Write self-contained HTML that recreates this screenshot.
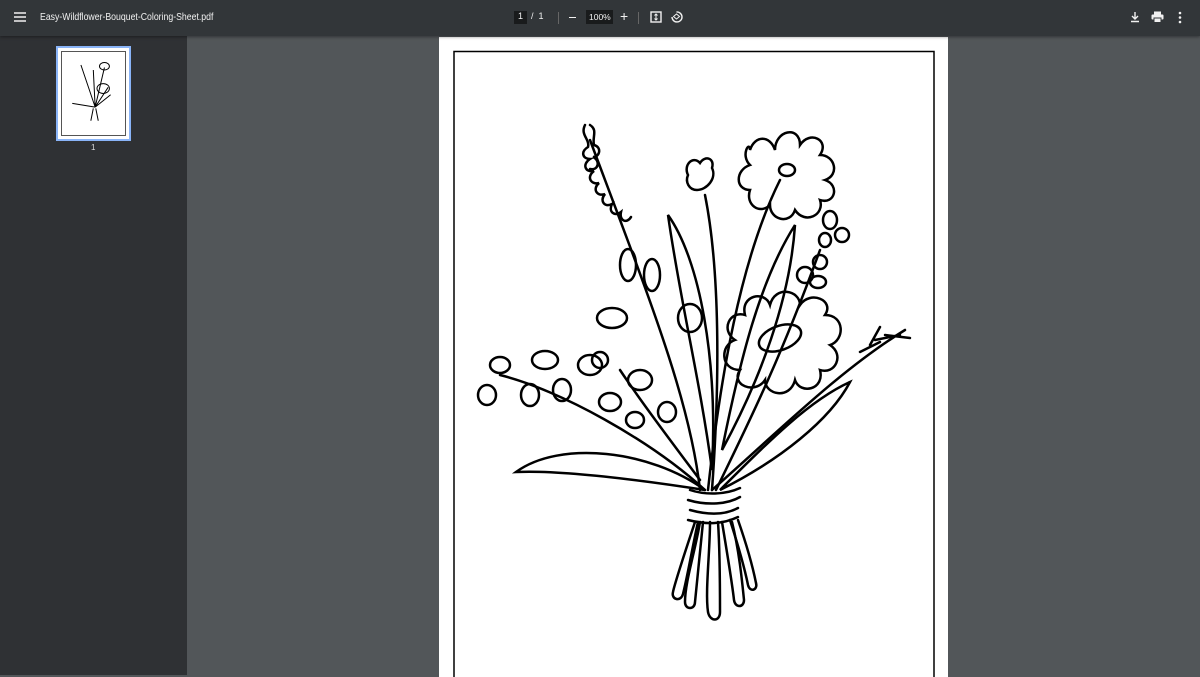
<!DOCTYPE html>
<html><head><style>
body{margin:0;width:1200px;height:675px;overflow:hidden;background:#525659;font-family:"Liberation Sans",sans-serif;position:relative}
#tb{position:absolute;left:0;top:0;width:1200px;height:36px;background:#323639;box-shadow:0 1px 3px rgba(0,0,0,.4);color:#f1f1f1;z-index:2}
#sb{position:absolute;left:0;top:36px;width:187px;height:639px;background:#2f3134}
#page{position:absolute;left:439px;top:37px;width:509px;height:640px;background:#fff}
.t{position:absolute;font-size:10px;top:11px}
</style></head><body>
<div id="tb">
<svg style="position:absolute;left:14px;top:12px" width="12" height="10"><path d="M0 1h12M0 5h12M0 9h12" stroke="#f1f1f1" stroke-width="1.4"/></svg>
<div class="t" style="left:40px;font-size:10.5px;transform:scaleX(0.83);transform-origin:left;white-space:nowrap">Easy-Wildflower-Bouquet-Coloring-Sheet.pdf</div>
<div style="position:absolute;left:514px;top:11px;width:13px;height:13px;background:#191b1c"></div>
<div class="t" style="left:518px;font-size:9px">1</div>
<div class="t" style="left:531px;font-size:9px">/ &nbsp;1</div>
<div style="position:absolute;left:558px;top:12px;width:1px;height:12px;background:#666"></div>
<div style="position:absolute;left:569px;top:17px;width:7px;height:1.4px;background:#f1f1f1"></div>
<div style="position:absolute;left:586px;top:10px;width:27px;height:14px;background:#191b1c"></div>
<div class="t" style="left:589px;font-size:8.5px;top:12px">100%</div>
<div class="t" style="left:620px;font-size:14px;top:8px">+</div>
<div style="position:absolute;left:638px;top:12px;width:1px;height:12px;background:#666"></div>
<svg style="position:absolute;left:650px;top:11px" width="12" height="12"><rect x="1" y="1" width="10" height="10" fill="none" stroke="#f1f1f1" stroke-width="1.4"/><path d="M6 3v6M4.5 4.5L6 3l1.5 1.5M4.5 7.5L6 9l1.5-1.5" stroke="#f1f1f1" fill="none"/></svg>
<svg style="position:absolute;left:670px;top:10px" width="13" height="13"><path d="M6.5 2A5 5 0 1 1 2 7" fill="none" stroke="#f1f1f1" stroke-width="1.4"/><path d="M6.5 4L3.5 6.5 6.5 9 9.5 6.5Z" fill="none" stroke="#f1f1f1"/></svg>
<svg style="position:absolute;left:1130px;top:11px" width="10" height="12"><path d="M5 1v7M2 5l3 3 3-3M1 10.5h8" stroke="#f1f1f1" stroke-width="1.4" fill="none"/></svg>
<svg style="position:absolute;left:1151px;top:11px" width="13" height="12"><rect x="3" y="0.5" width="7" height="3" fill="#f1f1f1"/><rect x="0.5" y="3.5" width="12" height="5" rx="1" fill="#f1f1f1"/><rect x="3" y="7" width="7" height="4.5" fill="#f1f1f1" stroke="#323639"/></svg>
<svg style="position:absolute;left:1178px;top:11px" width="4" height="13"><circle cx="2" cy="2" r="1.3" fill="#f1f1f1"/><circle cx="2" cy="6.5" r="1.3" fill="#f1f1f1"/><circle cx="2" cy="11" r="1.3" fill="#f1f1f1"/></svg>
</div>
<div id="sb">
<div style="position:absolute;left:56px;top:10px;width:71px;height:91px;border:2px solid #8ab4f8;background:#fff"></div>
<div style="position:absolute;left:61px;top:15px;width:63px;height:83px;border:1px solid #555"></div>
<svg style="position:absolute;left:61px;top:15px" width="63" height="83" viewBox="439 37 509 670"><g stroke="#000" stroke-width="8" fill="none"><path d="M715 490L600 150M715 490L790 170M715 490L700 190M715 490L820 330M715 490L530 460M715 490L840 390"/><ellipse cx="790" cy="160" rx="40" ry="30"/><ellipse cx="780" cy="340" rx="50" ry="40"/><path d="M700 500l-20 100M720 500l20 100"/></g></svg>
<div style="position:absolute;left:91px;top:107px;color:#ddd;font-size:8px">1</div>
</div>
<div id="page">
<svg width="509" height="640" viewBox="439 37 509 640" style="position:absolute;left:0;top:0">
<rect x="454" y="51.5" width="480" height="640" fill="none" stroke="#000" stroke-width="1.5"/>
<g stroke="#000" stroke-width="2.5" fill="none" stroke-linecap="round">
<path d="M700 490C690 400 650 300 590 140"/>
<path d="M708 490C720 380 740 260 780 180"/>
<path d="M712 490C720 380 720 270 705 195"/>
<path d="M716 490C750 420 780 360 820 250"/>
<path d="M705 490C650 440 560 390 500 375"/>
<path d="M712 490C780 430 840 370 905 330"/>
<path d="M700 480C670 440 640 400 620 370"/>
<path d="M705 490C650 450 560 440 516 472C560 470 640 480 705 490Z"/>
<path d="M720 490C770 440 810 400 850 382C830 420 780 460 720 490Z"/>
<path d="M712 470C700 380 680 300 668 215C700 260 718 360 712 470Z"/>
<path d="M722 450C740 360 760 280 795 225C790 300 760 380 722 450Z"/>
<path d="M750 150c5-15 20-15 25 0c0-20 25-25 25-5c10-15 30-5 20 10c15 0 20 20 5 25c15 5 10 25-5 20c5 15-15 25-25 10c-5 15-25 10-25-5c-10 10-25 0-20-15c-15 0-15-20 0-25c-10-10 0-25 0-15z"/>
<ellipse cx="787" cy="170" rx="8" ry="6"/>
<path d="M735 340c-15-10-5-30 10-25c-5-20 20-25 25-10c5-20 30-15 30 0c10-15 35-5 25 10c20 0 20 25 5 30c15 10 5 30-10 25c5 20-20 25-25 10c-5 20-30 15-30 0c-10 15-35 5-25-10c-20 0-20-25-5-30z"/>
<ellipse cx="780" cy="338" rx="22" ry="12" transform="rotate(-20 780 338)"/>
<path d="M688 175c-5-10 5-20 12-12c5-8 15-5 12 5c5 10-5 22-15 22c-8 0-12-8-9-15z"/>
<path d="M585 125c-5 10 5 14 3 22c-8 5-5 12 2 12c-8 5-5 14 4 12c-8 6-3 14 5 12c-7 6-2 14 6 11c-6 7 0 14 7 10c-4 8 3 13 9 8c-2 9 6 12 10 5"/>
<path d="M590 125c8 5 2 12 4 20c8 2 6 12-1 12c8 4 5 14-3 12"/>
<ellipse cx="628" cy="265" rx="8" ry="16"/>
<ellipse cx="652" cy="275" rx="8" ry="16"/>
<ellipse cx="612" cy="318" rx="15" ry="10"/>
<ellipse cx="690" cy="318" rx="12" ry="14"/>
<ellipse cx="640" cy="380" rx="12" ry="10"/>
<ellipse cx="610" cy="402" rx="11" ry="9"/>
<ellipse cx="667" cy="412" rx="9" ry="10"/>
<ellipse cx="635" cy="420" rx="9" ry="8"/>
<ellipse cx="590" cy="365" rx="12" ry="10"/>
<ellipse cx="545" cy="360" rx="13" ry="9"/>
<ellipse cx="500" cy="365" rx="10" ry="8"/>
<ellipse cx="487" cy="395" rx="9" ry="10"/>
<ellipse cx="530" cy="395" rx="9" ry="11"/>
<ellipse cx="562" cy="390" rx="9" ry="11"/>
<ellipse cx="600" cy="360" rx="8" ry="8"/>
<ellipse cx="830" cy="220" rx="7" ry="9"/>
<ellipse cx="842" cy="235" rx="7" ry="7"/>
<ellipse cx="825" cy="240" rx="6" ry="7"/>
<ellipse cx="820" cy="262" rx="7" ry="7"/>
<ellipse cx="805" cy="275" rx="8" ry="8"/>
<ellipse cx="818" cy="282" rx="8" ry="6"/>
<path d="M860 352l20-10M875 340l25-5M885 335l25 3M870 345l10-18"/>
<path d="M690 490c15 5 35 5 50-2M688 500c20 6 40 4 52-3M690 510c18 5 35 5 48-2M688 520c20 5 35 4 50-3"/>
<path d="M695 522c-10 30-20 60-22 70c-2 8 8 10 10 2c5-20 10-50 15-72"/>
<path d="M700 522c-5 30-15 60-15 80c0 8 10 8 10 0c2-20 5-50 8-80"/>
<path d="M710 522c0 30-5 70-2 90c2 10 12 10 12 0c0-20 0-60-2-90"/>
<path d="M722 522c5 30 10 60 12 78c1 8 10 8 10 0c-2-20-5-50-12-78"/>
<path d="M730 520c8 25 15 50 18 65c2 8 10 5 8-2c-3-15-10-40-18-63"/>
</g>
</svg>
</div>
</body></html>
